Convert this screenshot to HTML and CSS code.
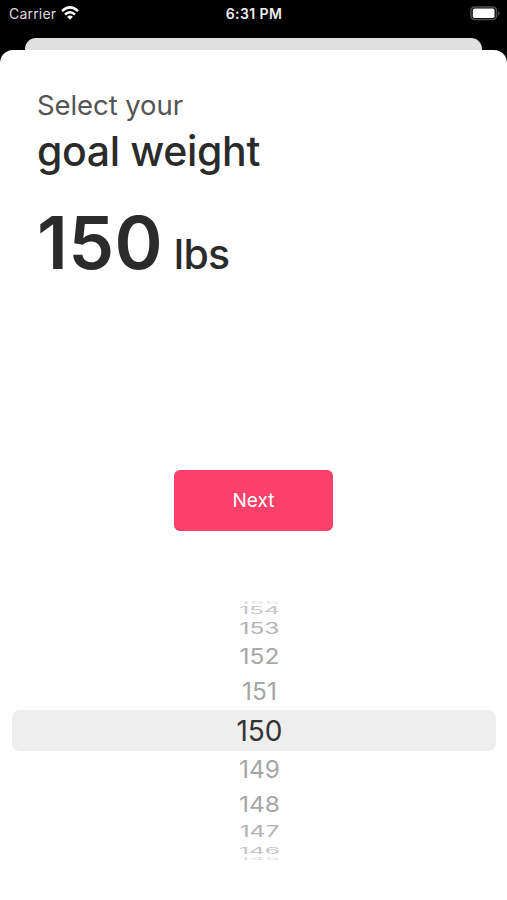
FILE: index.html
```html
<!DOCTYPE html>
<html lang="en">
<head>
<meta charset="utf-8">
<title>Goal weight</title>
<link rel="stylesheet" href="styles.css">
</head>
<body>
<header class="status">
  <div class="carrier"><span>Carrier</span>
    <svg class="wifi" width="18" height="14" viewBox="0 0 18 14" fill="none" stroke="#fff" stroke-width="2.5"><path d="M1 5.1Q9-2.3 17 5.1M4 8.5Q9 3.9 14 8.5"/><path d="M6.1 10.7Q9 8.2 11.9 10.7L9 13.7Z" fill="#fff" stroke="none"/></svg>
  </div>
  <time>6:31 PM</time>
  <svg class="battery" width="31" height="15" viewBox="0 0 31 15"><rect x=".9" y=".9" width="25.6" height="12.6" rx="3.8" fill="none" stroke="#505050" stroke-width="1.5"/><rect x="2.8" y="2.6" width="21.8" height="9.4" rx="1.8" fill="#fff"/><path d="M28.2 4.7Q31 7.2 28.2 9.7Z" fill="#555"/></svg>
</header>
<div class="back-card"></div>
<main class="sheet">
  <p class="lead">Select your</p>
  <h1>goal weight</h1>
  <p class="value"><strong>150</strong><span>lbs</span></p>
  <button class="next">Next</button>
  <div class="picker">
    <div class="row r155"><span>155</span></div>
    <div class="row r154"><span>154</span></div>
    <div class="row r153"><span>153</span></div>
    <div class="row r152"><span>152</span></div>
    <div class="row r151"><span>151</span></div>
    <div class="row selected"><span>150</span></div>
    <div class="row r149"><span>149</span></div>
    <div class="row r148"><span>148</span></div>
    <div class="row r147"><span>147</span></div>
    <div class="row r146"><span>146</span></div>
    <div class="row r145"><span>145</span></div>
  </div>
</main>
</body>
</html>
```

FILE: styles.css
```css
* { box-sizing: border-box; }
body { margin: 0; height: 900px; background: #000; color: #2b2b2b; font-family: Inter, "Liberation Sans", sans-serif; display: flex; flex-direction: column; overflow: hidden; }
p, h1 { margin: 0; }
.status { height: 38px; flex: none; display: grid; grid-template-columns: 1fr auto 1fr; align-items: start; padding: 6px 6px 0 9px; color: #fff; }
.carrier { display: flex; font-size: 14px; line-height: 16px; letter-spacing: .2px; color: #ddd; gap: 5px; }
.wifi { display: block; }
time { font-size: 14px; line-height: 16px; font-weight: 600; letter-spacing: .4px; color: #eee; transform: translateX(-1px); }
.battery { justify-self: end; }
.back-card { height: 12px; flex: none; margin: 0 25px; background: #e0e0e0; border-radius: 11px 11px 0 0; }
.sheet { flex: 1; background: #fff; border-radius: 13px 13px 0 0; padding-top: 37px; display: flex; flex-direction: column; }
.lead { margin-left: 37px; font-size: 27.5px; line-height: 36px; letter-spacing: -.08px; color: #555; }
h1 { margin-left: 37px; font-size: 41px; line-height: 56px; font-weight: 500; letter-spacing: -.35px; white-space: nowrap; }
.value { margin: 24px 0 0 37px; height: 80px; display: flex; align-items: baseline; line-height: 80px; gap: 11px; }
.value strong { font-size: 73px; font-weight: 600; letter-spacing: .3px; }
.value span { font-size: 41px; font-weight: 500; letter-spacing: -.7px; }
.next { align-self: center; margin-top: 187px; width: 159px; height: 61px; flex: none; border: 0; border-radius: 6px; background: #fb406b; color: #fff; font: 400 19px/61px Inter, sans-serif; padding: 0; }
.picker { margin: 69px 11px 0 12px; }
.row { display: flex; justify-content: center; align-items: center; padding-left: 11px; overflow: hidden; color: #a6a6a6; font-size: 24.5px; line-height: 1; }
.row span { flex: none; }
.selected { height: 41px; border-radius: 8px; background: #eee; color: #333; font-size: 28px; }
.r155 { height: 4px; color: #ddd; }
.r155 span { transform: scaleY(.15); }
.r154 { height: 13px; color: #c4c4c4; }
.r154 span { transform: scaleY(.4); }
.r153 { height: 23px; color: #b2b2b2; }
.r153 span { transform: translateY(.5px) scaleY(.64); }
.r152 { height: 33px; }
.r152 span { transform: scaleY(.86); }
.r151 { height: 37px; }
.r149 { height: 36px; }
.r148 { height: 34px; }
.r148 span { transform: scaleY(.86); }
.r147 { height: 20px; color: #b2b2b2; }
.r147 span { transform: translateY(.5px) scaleY(.64); }
.r146 { height: 16px; color: #c4c4c4; }
.r146 span { transform: translateY(1px) scaleY(.38); }
.r145 { height: 3px; color: #ddd; }
.r145 span { transform: scaleY(.15); }
```
